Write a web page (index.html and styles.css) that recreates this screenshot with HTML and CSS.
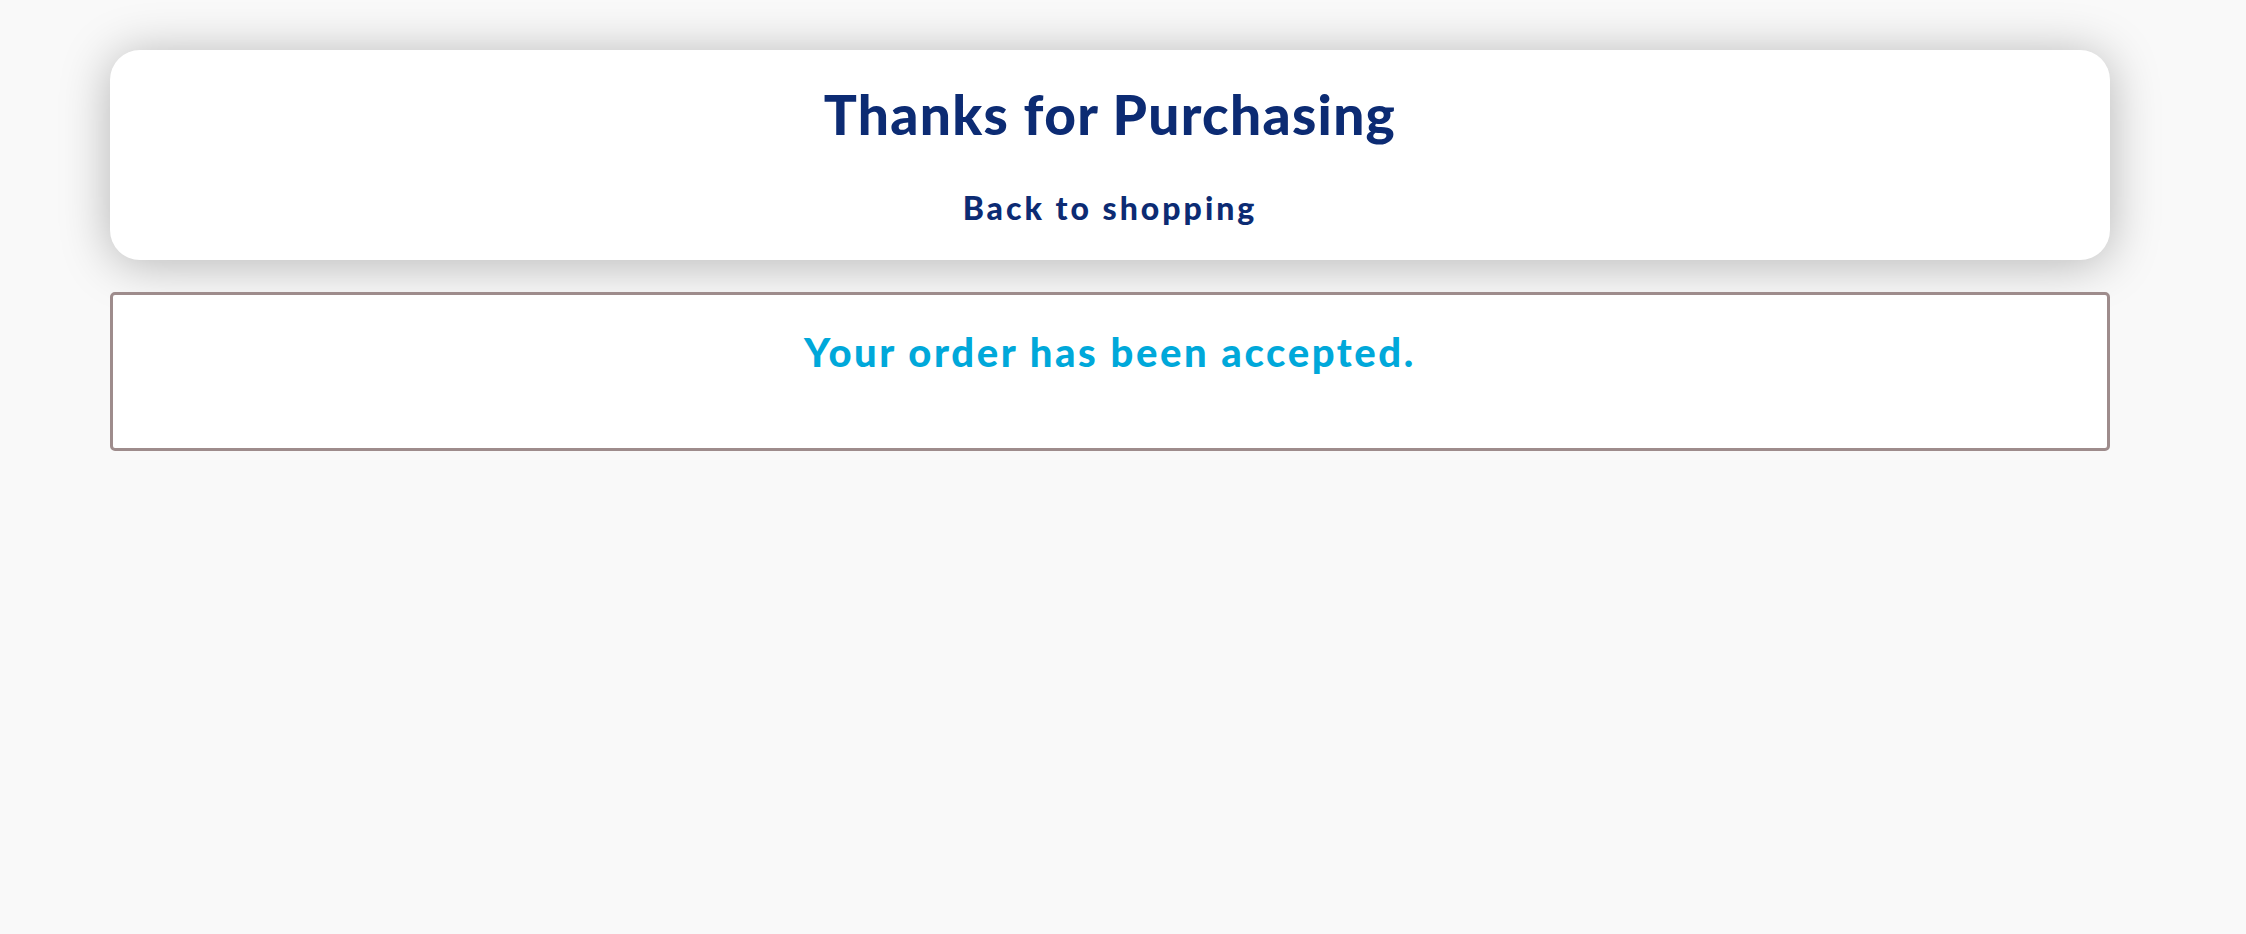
FILE: index.html
```html
<!DOCTYPE html>
<html lang="en">
<head>
<meta charset="utf-8">
<title>Thanks for Purchasing</title>
<link rel="stylesheet" href="styles.css">
</head>
<body>
<main class="page">
  <section class="thanks-card">
    <h1 class="thanks-title">Thanks for Purchasing</h1>
    <a class="back-link" href="#">Back to shopping</a>
  </section>
  <section class="order-box">
    <h2 class="order-msg">Your order has been accepted.</h2>
  </section>
</main>
</body>
</html>
```
FILE: styles.css
```css
html, body {
  margin: 0;
  padding: 0;
  background: #f9f9f9;
}
body {
  font-family: Lato, "Open Sans", sans-serif;
  font-weight: 700;
}
.page {
  display: flex;
  flex-direction: column;
  gap: 32px;
  width: 2000px;
  padding: 50px 0 0 110px;
}
.thanks-card {
  box-sizing: border-box;
  height: 210px;
  background: #ffffff;
  border-radius: 30px;
  box-shadow: 0 4px 50px rgba(0, 0, 0, 0.28);
  display: flex;
  flex-direction: column;
  align-items: center;
  padding-top: 31px;
}
.thanks-title {
  margin: 0;
  font-size: 55px;
  line-height: 66px;
  font-weight: 900;
  letter-spacing: 1.3px;
  color: #0c2b73;
}
.back-link {
  margin-top: 42px;
  font-size: 32px;
  line-height: 38px;
  font-weight: 900;
  letter-spacing: 3px;
  color: #0c2b73;
  text-decoration: none;
}
.order-box {
  box-sizing: border-box;
  height: 159px;
  background: #ffffff;
  border: 3px solid #9e8c8c;
  border-radius: 5px;
  display: flex;
  justify-content: center;
  padding-top: 33px;
}
.order-msg {
  margin: 0;
  font-size: 40px;
  line-height: 48px;
  font-weight: 900;
  letter-spacing: 2.6px;
  color: #00a8da;
}
```
